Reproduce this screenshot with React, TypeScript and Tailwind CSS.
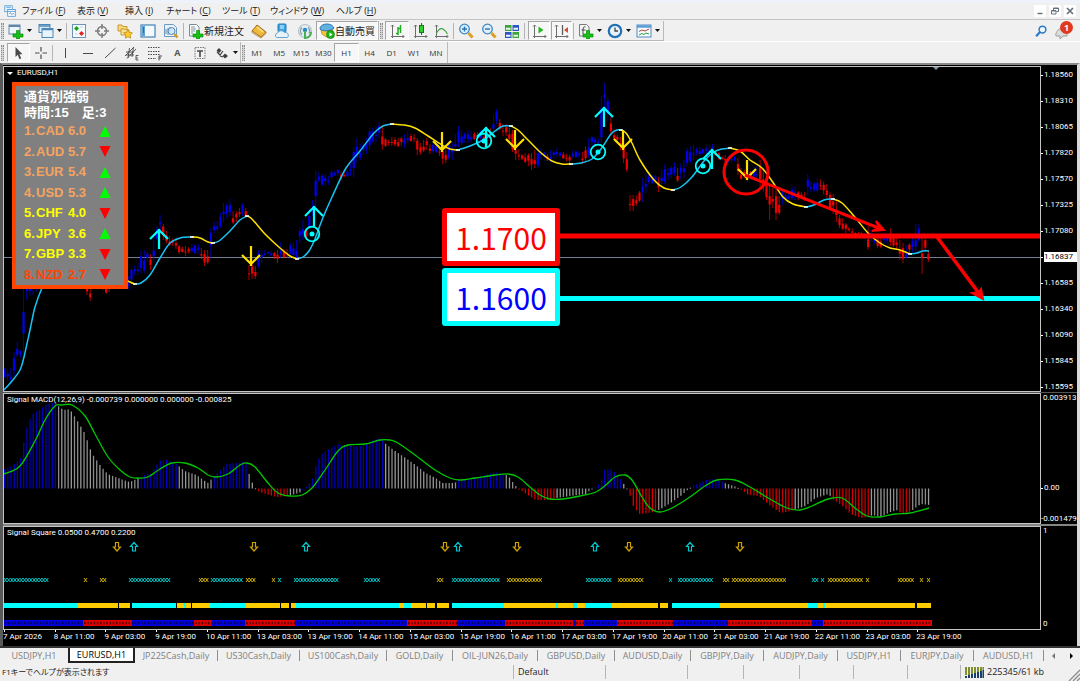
import type { ReactNode } from "react";

type Point = [number, number];
type Tone = "b" | "r" | "g";
type Bar = [number, number, number, Tone];
type Run = [number, number, string];

const BAR_STEP = 3.175;
const CYAN = "#00ffff";
const SKY = "#17c3f5";
const YELLOW = "#ffe100";

const menus = [
  { label: "ファイル", key: "F", width: "w-[55px]" },
  { label: "表示", key: "V", width: "w-[48px]" },
  { label: "挿入", key: "I", width: "w-[41px]" },
  { label: "チャート", key: "C", width: "w-[56px]" },
  { label: "ツール", key: "T", width: "w-[48px]" },
  { label: "ウィンドウ", key: "W", width: "w-[66px]" },
  { label: "ヘルプ", key: "H", width: "w-[50px]" },
];

const timeframes = ["M1", "M5", "M15", "M30", "H1", "H4", "D1", "W1", "MN"];

const strengths = [
  { rank: 1, code: "CAD", value: "6.0", up: true, color: "text-[#f4a460]" },
  { rank: 2, code: "AUD", value: "5.7", up: false, color: "text-[#f4a460]" },
  { rank: 3, code: "EUR", value: "5.4", up: true, color: "text-[#f4a460]" },
  { rank: 4, code: "USD", value: "5.3", up: true, color: "text-[#f4a460]" },
  { rank: 5, code: "CHF", value: "4.0", up: false, color: "text-[#ffff00]" },
  { rank: 6, code: "JPY", value: "3.6", up: true, color: "text-[#ffff00]" },
  { rank: 7, code: "GBP", value: "3.3", up: false, color: "text-[#ffff00]" },
  { rank: 8, code: "NZD", value: "2.7", up: false, color: "text-[#ff4500]" },
];

const prices = [
  "1.18560", "1.18310", "1.18065", "1.17820", "1.17570", "1.17325", "1.17080",
  "1.16837", "1.16585", "1.16340", "1.16090", "1.15845", "1.15595",
];

const times = [
  "7 Apr 2026", "8 Apr 11:00", "9 Apr 03:00", "9 Apr 19:00", "10 Apr 11:00",
  "13 Apr 03:00", "13 Apr 19:00", "14 Apr 11:00", "15 Apr 03:00", "15 Apr 19:00",
  "16 Apr 11:00", "17 Apr 03:00", "17 Apr 19:00", "20 Apr 11:00", "21 Apr 03:00",
  "21 Apr 19:00", "22 Apr 11:00", "23 Apr 03:00", "23 Apr 19:00",
];

const tabs = [
  { name: "USDJPY,H1", width: "w-[68px]" },
  { name: "EURUSD,H1", width: "w-[67px]" },
  { name: "JP225Cash,Daily", width: "w-[83px]" },
  { name: "US30Cash,Daily", width: "w-[82px]" },
  { name: "US100Cash,Daily", width: "w-[87px]" },
  { name: "GOLD,Daily", width: "w-[66px]" },
  { name: "OIL-JUN26,Daily", width: "w-[85px]" },
  { name: "GBPUSD,Daily", width: "w-[77px]" },
  { name: "AUDUSD,Daily", width: "w-[76px]" },
  { name: "GBPJPY,Daily", width: "w-[73px]" },
  { name: "AUDJPY,Daily", width: "w-[74px]" },
  { name: "USDJPY,H1", width: "w-[63px]" },
  { name: "EURJPY,Daily", width: "w-[73px]" },
  { name: "AUDUSD,H1", width: "w-[70px]" },
];

// x, high, low, direction
const candles: Bar[] = [
  [4, 368, 378, "b"], [9, 368, 384, "b"], [12, 352, 376, "b"], [16, 342, 357, "b"], [20, 350, 358, "b"],
  [23, 288, 355, "b"], [26, 260, 300, "b"], [60, 240, 275, "b"], [84, 270, 285, "r"], [88, 284, 295, "r"],
  [91, 284, 301, "r"], [94, 270, 284, "r"], [106, 282, 294, "r"], [110, 282, 292, "r"], [113, 270, 284, "b"],
  [127, 276, 289, "b"], [131, 268, 281, "b"], [136, 263, 275, "b"], [139, 261, 273, "b"], [142, 250, 273, "b"],
  [146, 252, 262, "b"], [150, 254, 270, "r"], [153, 236, 262, "b"], [157, 226, 240, "b"], [160, 215, 231, "b"],
  [163, 224, 240, "r"], [168, 236, 246, "r"], [174, 238, 249, "r"], [180, 245, 254, "r"], [186, 246, 256, "r"],
  [191, 244, 253, "b"], [196, 244, 254, "b"], [200, 248, 259, "r"], [204, 250, 266, "r"], [208, 250, 264, "r"],
  [211, 228, 258, "b"], [215, 222, 234, "b"], [220, 213, 228, "b"], [224, 203, 222, "b"], [229, 199, 216, "b"],
  [233, 211, 224, "r"], [237, 211, 222, "r"], [241, 203, 216, "b"], [245, 208, 217, "r"], [248, 265, 280, "r"],
  [252, 262, 279, "r"], [256, 266, 279, "r"], [259, 250, 268, "b"], [264, 250, 256, "b"], [270, 251, 256, "b"],
  [274, 252, 259, "r"], [277, 250, 263, "r"], [281, 242, 258, "b"], [285, 249, 258, "r"], [289, 243, 258, "b"],
  [295, 240, 260, "b"], [300, 227, 243, "b"], [304, 220, 240, "b"], [306, 228, 240, "r"], [309, 208, 230, "b"],
  [313, 200, 216, "b"], [316, 171, 208, "b"], [319, 172, 182, "b"], [323, 174, 186, "b"], [327, 176, 185, "b"],
  [332, 170, 179, "b"], [338, 169, 176, "b"], [342, 172, 181, "r"], [346, 170, 177, "b"], [351, 164, 176, "b"],
  [354, 147, 178, "b"], [357, 138, 162, "b"], [361, 144, 160, "b"], [365, 138, 154, "b"], [369, 128, 150, "b"],
  [374, 126, 142, "b"], [379, 122, 138, "b"], [382, 125, 150, "r"], [386, 138, 147, "r"], [391, 137, 146, "r"],
  [399, 138, 147, "r"], [403, 134, 148, "b"], [408, 132, 143, "b"], [412, 134, 142, "r"], [416, 138, 155, "r"],
  [420, 143, 155, "r"], [425, 138, 150, "r"], [430, 144, 154, "r"], [435, 142, 153, "b"], [439, 146, 156, "r"],
  [443, 147, 164, "r"], [447, 148, 163, "r"], [450, 142, 160, "b"], [454, 134, 152, "b"], [459, 126, 147, "b"],
  [463, 132, 143, "b"], [469, 130, 143, "b"], [475, 132, 140, "r"], [480, 130, 142, "b"], [486, 132, 146, "r"],
  [490, 128, 145, "r"], [494, 115, 135, "b"], [497, 109, 124, "b"], [500, 119, 130, "r"], [504, 124, 136, "r"],
  [509, 128, 142, "r"], [512, 130, 152, "r"], [516, 145, 160, "r"], [521, 154, 160, "r"], [526, 153, 163, "r"],
  [530, 153, 170, "r"], [534, 150, 168, "r"], [537, 148, 168, "b"], [542, 148, 160, "b"], [546, 154, 161, "r"],
  [551, 150, 162, "b"], [557, 148, 157, "b"], [563, 152, 159, "r"], [568, 155, 163, "r"], [573, 150, 158, "b"],
  [579, 151, 158, "b"], [583, 152, 164, "r"], [588, 138, 158, "b"], [592, 136, 146, "b"], [598, 138, 144, "b"],
  [601, 96, 143, "b"], [604, 83, 108, "b"], [608, 97, 122, "b"], [611, 117, 135, "r"], [615, 129, 140, "r"],
  [619, 137, 150, "r"], [622, 142, 163, "r"], [625, 152, 172, "r"], [628, 165, 178, "r"], [630, 195, 211, "r"],
  [634, 195, 211, "r"], [638, 191, 202, "r"], [641, 178, 202, "b"], [644, 173, 193, "b"], [649, 174, 184, "b"],
  [654, 175, 184, "b"], [657, 177, 192, "r"], [660, 170, 184, "b"], [664, 164, 184, "b"], [669, 168, 180, "b"],
  [674, 162, 176, "b"], [678, 168, 182, "r"], [682, 160, 178, "b"], [687, 148, 167, "b"], [692, 145, 160, "b"],
  [698, 147, 156, "b"], [706, 146, 154, "b"], [712, 144, 156, "b"], [718, 152, 160, "r"], [724, 155, 162, "r"],
  [730, 156, 163, "b"], [734, 156, 162, "b"], [738, 158, 175, "r"], [742, 168, 180, "r"], [748, 170, 181, "r"],
  [753, 167, 178, "b"], [758, 166, 180, "b"], [761, 160, 188, "r"], [765, 177, 200, "r"], [769, 183, 220, "r"],
  [773, 188, 208, "r"], [777, 188, 220, "r"], [780, 196, 215, "r"], [783, 190, 205, "b"], [788, 192, 200, "b"],
  [793, 186, 200, "b"], [799, 191, 200, "r"], [804, 192, 201, "r"], [808, 174, 196, "b"], [812, 182, 192, "b"],
  [818, 178, 192, "b"], [821, 179, 190, "r"], [825, 184, 198, "r"], [829, 192, 210, "r"], [834, 194, 214, "r"],
  [837, 200, 222, "r"], [840, 215, 228, "r"], [845, 223, 233, "r"], [851, 228, 234, "r"], [858, 232, 238, "r"],
  [865, 233, 239, "b"], [868, 226, 250, "r"], [872, 230, 242, "b"], [876, 238, 248, "r"], [880, 238, 248, "r"],
  [885, 233, 244, "b"], [891, 228, 246, "r"], [895, 238, 250, "r"], [899, 240, 260, "r"], [903, 243, 263, "r"],
  [907, 245, 259, "b"], [910, 243, 254, "r"], [914, 224, 253, "b"], [917, 224, 242, "b"], [920, 232, 244, "b"],
  [923, 236, 274, "r"], [926, 238, 252, "r"], [929, 250, 262, "r"],
];

// each piece of the moving average starts where the previous one ends
const average: { color: string; points: Point[] }[] = [
  { color: SKY, points: [[4, 390], [12, 381], [20, 370], [24, 357], [30, 330], [35, 307], [42, 288], [55, 262]] },
  { color: YELLOW, points: [[110, 262], [122, 277], [130, 282], [135, 284]] },
  { color: SKY, points: [[135, 284], [141, 283], [150, 275], [160, 258], [170, 243], [180, 238], [192, 237]] },
  { color: YELLOW, points: [[192, 237], [200, 238], [208, 242], [213, 243]] },
  { color: SKY, points: [[213, 243], [219, 241], [230, 231], [240, 220], [247, 216]] },
  { color: YELLOW, points: [[247, 216], [252, 219], [265, 234], [280, 248], [290, 256], [297, 259]] },
  { color: SKY, points: [[297, 259], [303, 257], [309, 251], [315, 239], [322, 220], [332, 197], [346, 168], [360, 151], [374, 133], [383, 126], [392, 124]] },
  { color: YELLOW, points: [[392, 124], [404, 125], [415, 128], [428, 136], [442, 145], [450, 149], [458, 150]] },
  { color: SKY, points: [[458, 150], [470, 146], [485, 139], [495, 131], [503, 126], [511, 126]] },
  { color: YELLOW, points: [[511, 126], [518, 130], [528, 140], [540, 152], [552, 161], [562, 164], [571, 164]] },
  { color: SKY, points: [[571, 164], [581, 163], [592, 159], [601, 149], [611, 134], [617, 130], [621, 130]] },
  { color: YELLOW, points: [[621, 130], [626, 133], [632, 143], [640, 160], [654, 180], [664, 188], [673, 190]] },
  { color: SKY, points: [[673, 190], [681, 187], [692, 177], [704, 161], [714, 152], [722, 149], [730, 148]] },
  { color: YELLOW, points: [[730, 148], [740, 151], [750, 160], [762, 168], [772, 181], [783, 197], [793, 204], [806, 207]] },
  { color: SKY, points: [[806, 207], [814, 205], [824, 200], [833, 199]] },
  { color: YELLOW, points: [[833, 199], [842, 203], [854, 216], [868, 233], [880, 243], [890, 248], [900, 250], [910, 254]] },
  { color: SKY, points: [[910, 254], [917, 253], [923, 251], [929, 251]] },
];

const upSignals: Point[] = [[159, 229], [314, 206], [486, 127], [604, 107], [712, 149]];
const downSignals: Point[] = [[251, 266], [442, 152], [515, 150], [623, 150], [747, 180]];
const targets: Point[] = [[312, 234], [484, 141], [598, 152], [703, 166]];

const macd: [number, number, Tone][] = [
  [4, 469, "b"], [10, 467, "b"], [15, 463, "b"], [20, 458, "b"], [23, 443, "b"], [26, 428, "b"], [29, 420, "b"],
  [33, 413, "b"], [40, 409, "b"], [45, 405, "b"], [50, 403, "b"], [56, 403, "b"], [59, 408, "g"], [65, 410, "g"],
  [69, 409, "g"], [75, 418, "g"], [84, 433, "g"], [91, 453, "g"], [100, 466, "g"], [107, 474, "g"], [120, 479, "g"],
  [129, 482, "g"], [136, 479, "g"], [139, 478, "b"], [145, 474, "b"], [150, 474, "b"], [155, 466, "b"],
  [160, 460, "b"], [167, 460, "b"], [174, 463, "b"], [177, 465, "g"], [184, 471, "g"], [196, 475, "g"],
  [207, 483, "g"], [210, 480, "g"], [213, 477, "b"], [220, 470, "b"], [226, 464, "b"], [235, 463, "b"],
  [243, 462, "b"], [246, 464, "b"], [249, 476, "g"], [253, 486, "g"], [257, 491, "r"], [265, 494, "r"],
  [276, 497, "r"], [288, 496, "r"], [291, 495, "g"], [298, 493, "g"], [302, 491, "b"], [308, 484, "b"],
  [313, 477, "b"], [316, 462, "b"], [321, 454, "b"], [330, 448, "b"], [338, 444, "b"], [347, 446, "b"],
  [360, 446, "b"], [370, 441, "b"], [380, 438, "b"], [384, 443, "g"], [393, 450, "g"], [405, 458, "g"],
  [415, 465, "g"], [425, 473, "g"], [435, 478, "g"], [442, 483, "g"], [454, 483, "g"], [458, 480, "b"],
  [470, 479, "b"], [485, 475, "b"], [495, 472, "b"], [504, 475, "b"], [507, 475, "g"], [512, 482, "g"],
  [516, 487, "g"], [520, 490, "r"], [527, 495, "r"], [535, 500, "r"], [552, 500, "r"], [556, 498, "g"],
  [570, 496, "g"], [585, 494, "g"], [590, 490, "g"], [595, 487, "b"], [600, 482, "b"], [604, 470, "b"],
  [610, 469, "b"], [615, 473, "b"], [619, 478, "b"], [622, 482, "g"], [625, 487, "g"], [628, 491, "r"],
  [633, 507, "r"], [639, 514, "r"], [648, 513, "r"], [656, 511, "r"], [660, 509, "g"], [670, 503, "g"],
  [680, 496, "g"], [688, 489, "g"], [692, 486, "b"], [705, 480, "b"], [715, 479, "b"], [721, 481, "b"],
  [724, 483, "g"], [736, 487, "g"], [741, 490, "r"], [748, 495, "r"], [758, 496, "r"], [770, 506, "r"],
  [780, 513, "r"], [790, 511, "r"], [793, 510, "g"], [805, 506, "g"], [815, 498, "g"], [828, 494, "g"],
  [832, 499, "r"], [842, 506, "r"], [850, 514, "r"], [860, 518, "r"], [868, 517, "r"], [872, 515, "g"],
  [880, 517, "g"], [890, 512, "g"], [897, 510, "g"], [901, 514, "r"], [908, 512, "r"], [912, 510, "g"],
  [920, 504, "g"], [929, 505, "g"],
];

const macdSignal: Point[] = [
  [4, 474], [20, 466], [35, 441], [45, 420], [55, 406], [62, 405], [72, 405], [85, 416], [95, 434], [108, 457],
  [120, 470], [130, 477], [138, 478], [148, 477], [160, 469], [172, 463], [185, 463], [198, 468], [208, 475],
  [216, 477], [228, 474], [240, 465], [247, 463], [255, 467], [268, 483], [278, 493], [290, 496], [302, 495],
  [312, 488], [325, 470], [338, 451], [348, 445], [365, 444], [380, 440], [390, 440], [398, 443], [415, 455],
  [435, 470], [450, 478], [460, 480], [475, 478], [495, 475], [508, 474], [518, 477], [530, 487], [540, 495],
  [550, 499], [563, 499], [580, 496], [596, 492], [607, 484], [615, 477], [625, 475], [632, 480], [642, 497],
  [650, 508], [660, 512], [672, 508], [690, 497], [705, 486], [717, 480], [735, 480], [750, 487], [770, 499],
  [787, 508], [800, 510], [812, 506], [828, 499], [842, 498], [855, 508], [867, 516], [880, 517], [895, 514],
  [910, 513], [929, 508],
];

const squareArrows: [number, boolean][] = [
  [117, false], [134, true], [254, false], [306, true], [445, false], [458, true],
  [517, false], [595, true], [629, false], [690, true], [740, false],
];

const crossRuns: Run[] = [
  [4, 50, "c"], [84, 88, "y"], [100, 107, "y"], [129, 171, "c"], [199, 209, "y"], [211, 244, "c"], [246, 257, "y"],
  [272, 276, "y"], [278, 282, "c"], [294, 339, "c"], [364, 380, "c"], [437, 444, "y"], [452, 501, "c"],
  [507, 543, "y"], [586, 613, "c"], [618, 644, "y"], [669, 673, "c"], [678, 714, "c"], [723, 730, "y"],
  [732, 787, "y"], [812, 819, "c"], [821, 826, "c"], [828, 864, "y"], [866, 870, "y"], [898, 915, "y"],
  [920, 924, "y"], [927, 931, "y"],
];

const bandRuns: Run[] = [
  [4, 78, "c"], [78, 118, "y"], [119, 130, "y"], [132, 176, "c"], [177, 184, "y"], [184, 186, "c"], [186, 191, "y"],
  [192, 210, "y"], [210, 246, "c"], [246, 280, "y"], [281, 289, "y"], [291, 296, "y"], [296, 399, "c"],
  [399, 404, "y"], [404, 411, "c"], [411, 426, "y"], [427, 435, "y"], [437, 449, "y"], [452, 504, "c"],
  [504, 556, "y"], [556, 558, "c"], [558, 573, "y"], [573, 577, "c"], [577, 585, "y"], [585, 612, "c"],
  [612, 658, "y"], [660, 668, "y"], [672, 720, "c"], [720, 808, "y"], [808, 818, "c"], [818, 823, "y"],
  [823, 825, "c"], [825, 915, "y"], [917, 931, "y"],
];

const trendRuns: Run[] = [
  [4, 83, "b"], [83, 132, "r"], [132, 194, "b"], [194, 212, "r"], [212, 245, "b"], [245, 295, "r"], [295, 407, "b"],
  [407, 457, "r"], [457, 505, "b"], [505, 573, "r"], [573, 576, "b"], [576, 584, "r"], [584, 617, "b"],
  [617, 673, "r"], [673, 728, "b"], [728, 812, "r"], [812, 823, "b"], [823, 932, "r"],
];

const barXs = Array.from({ length: 292 }, (_, i) => 4 + i * BAR_STEP);

function locate<T extends [number, ...unknown[]]>(rows: T[], x: number) {
  let i = 0;
  while (i < rows.length - 2 && rows[i + 1][0] < x) i++;
  const a = rows[i];
  const b = rows[i + 1];
  const t = Math.min(1, Math.max(0, (x - a[0]) / (b[0] - a[0])));
  return { a, b, t };
}

const mix = (a: number, b: number, t: number) => a + (b - a) * t;

function curve(points: Point[]) {
  let d = `M${points[0][0]} ${points[0][1]}`;
  for (let i = 0; i < points.length - 1; i++) {
    const p0 = points[i - 1] ?? points[i];
    const p1 = points[i];
    const p2 = points[i + 1];
    const p3 = points[i + 2] ?? p2;
    d += `C${p1[0] + (p2[0] - p0[0]) / 6} ${p1[1] + (p2[1] - p0[1]) / 6} ${p2[0] - (p3[0] - p1[0]) / 6} ${p2[1] - (p3[1] - p1[1]) / 6} ${p2[0]} ${p2[1]}`;
  }
  return d;
}

function crosses(from: number, to: number) {
  let d = "";
  for (let x = from; x + 2.5 <= to; x += BAR_STEP) d += `M${x} 578l3 4M${x + 3} 578l-3 4`;
  return d;
}

function Icon({ children, size = "size-4" }: { children: ReactNode; size?: string }) {
  return (
    <svg viewBox="0 0 16 16" className={`${size} shrink-0`} fill="none" aria-hidden="true">
      {children}
    </svg>
  );
}

function Caret() {
  return (
    <svg viewBox="0 0 5 3" className="h-[3px] w-[5px] shrink-0" aria-hidden="true">
      <path d="M0 0h5L2.5 3z" fill="#111" />
    </svg>
  );
}

function ToolButton({
  label,
  children,
  caret,
  pressed,
  width = "flex-1",
}: {
  label: string;
  children: ReactNode;
  caret?: boolean;
  pressed?: boolean;
  width?: string;
}) {
  return (
    <button
      type="button"
      aria-label={label}
      aria-pressed={pressed}
      className={`flex h-[19px] items-center justify-center gap-[3px] ${width} ${
        pressed ? "border border-[#a5a5a5] border-r-white border-b-white bg-[#f7f7f7]" : ""
      }`}
    >
      {children}
      {caret && <Caret />}
    </button>
  );
}

function Grip() {
  return <div className="mx-px h-4 w-[3px] shrink-0 border-x border-dotted border-[#8f8f8f] bg-[#d2d2d2]" />;
}

function Divider() {
  return <div className="mx-px h-4 w-px shrink-0 bg-[#b4b4b4]" />;
}

const plus = <path d="M8.5 7.5h3V11H15v3h-3.5v2h-3v-2H5v-3h3.5z" fill="#16c116" stroke="#0b8a0b" strokeWidth=".7" />;
const axes = <path d="M3.5 2v11.5H15M2 13.5h1.500M3.500 13.5V15M2 3.5 3.5 2 5 3.5M13.5 12l1.500 1.500-1.500 1.500" stroke="#6c6c6c" />;

function MenuBar() {
  return (
    <div className="flex h-5 items-center border-t-3 border-b border-t-[#edf2fb] border-b-[#c4c4c4] pl-1">
      <Icon size="size-3">
        <rect x="1" y="1" width="10" height="8" fill="#e3f1fb" stroke="#4f9bd4" />
        <rect x="5" y="6" width="10" height="9" fill="#fff" stroke="#3b8acb" />
        <path d="M5 8.500h10M3 3h6M7 12l1.500-2 2 3 1.500-2 1.500 1" stroke="#3b8acb" />
      </Icon>
      <nav className="ml-[6px] flex">
        {menus.map((menu) => (
          <button key={menu.key} type="button" className={`${menu.width} text-left whitespace-nowrap`}>
            {menu.label} (<span className="underline">{menu.key}</span>)
          </button>
        ))}
      </nav>
      <div className="mr-1 ml-auto flex gap-[3px]">
        {["Minimize", "Restore", "Close"].map((name) => (
          <button key={name} type="button" aria-label={name} className="flex h-3 w-3 items-center justify-center bg-white">
            <Icon size="size-2">
              {name === "Minimize" && <path d="M3 13h10" stroke="#66727c" strokeWidth="3" />}
              {name === "Restore" && (
                <path d="M5 6V2h10v7h-4M1 7h9v7H1zM1 8h9M5 3h10" stroke="#66727c" strokeWidth="2" />
              )}
              {name === "Close" && <path d="m2 2 12 12M14 2 2 14" stroke="#66727c" strokeWidth="3.500" />}
            </Icon>
          </button>
        ))}
      </div>
    </div>
  );
}

function StandardToolbar() {
  return (
    <div className="flex h-[22px] items-center border-b border-[#fdfdfd] pt-px">
      <div className="flex h-full items-center border-r border-b border-[#b9b9b9]">
        <Grip />
        <ToolButton label="New chart" caret width="w-[29px]">
          <Icon>
            <rect x="1" y="2" width="11" height="9" fill="#eef6fc" stroke="#5f87ab" />
            <path d="M1 3h11" stroke="#5f87ab" strokeWidth="2" />
            {plus}
          </Icon>
        </ToolButton>
        <ToolButton label="Profiles" caret width="w-[31px]">
          <Icon>
            <rect x="1" y="1.500" width="11" height="8" fill="#dcecf8" stroke="#4d87b8" />
            <rect x="4" y="5.500" width="11" height="9" fill="#e9f3fb" stroke="#4d87b8" />
            <path d="M4 6.500h11M1 3h11" stroke="#4d87b8" strokeWidth="1.500" />
          </Icon>
        </ToolButton>
        <Divider />
        <div className="flex w-[114px]">
          <ToolButton label="Market watch">
            <Icon>
              <rect x="1.500" y="1.500" width="13" height="13" fill="#f6faff" stroke="#6b93b8" />
              <path d="m5.500 3 2.500 2.500L5.500 8 3 5.500z" fill="#16a516" />
              <path d="m10.500 8 2.500 2.500-2.500 2.500L8 10.500z" fill="#e32222" />
              <path d="M9 4h3M4 11h3" stroke="#c3cfdb" />
            </Icon>
          </ToolButton>
          <ToolButton label="Data window">
            <Icon>
              <circle cx="8" cy="8" r="4.500" stroke="#7c7c7c" strokeWidth="1.500" />
              <path d="M8 1v5M8 10v5M1 8h5M10 8h5" stroke="#7c7c7c" strokeWidth="1.500" />
            </Icon>
          </ToolButton>
          <ToolButton label="Navigator">
            <Icon>
              <path d="M1 2h4l1 1.500h4V8H1z" fill="#f9d877" stroke="#c79a32" />
              <path d="M4 6h4l1 1h3v5H4z" fill="#fbe093" stroke="#c79a32" />
              <path d="m11 6.500 1.400 2.900 3 .4-2.200 2.200.5 3.200-2.700-1.500-2.700 1.500.5-3.200-2.200-2.200 3-.4z" fill="#ffc928" stroke="#bf8a17" strokeWidth=".8" />
            </Icon>
          </ToolButton>
          <ToolButton label="Terminal">
            <Icon>
              <rect x="1" y="2" width="14" height="12" fill="#f4f9fd" stroke="#4383b5" strokeWidth="1.200" />
              <path d="M2 3h3v10H2z" fill="#5b9fd4" />
              <path d="M3 5h1M3 7h1M3 9h1" stroke="#173e5e" />
            </Icon>
          </ToolButton>
          <ToolButton label="Strategy tester">
            <Icon>
              <path d="M1.500 1.500h9l3 3v9h-12z" fill="#e9f2fa" stroke="#6d9cc3" />
              <path d="M3 11V6M5 12V5M7 9V4" stroke="#638cac" />
              <circle cx="8.500" cy="8" r="3.500" fill="#cfe5f6" fillOpacity=".8" stroke="#5286b0" />
              <path d="m11.500 11 3 3.500" stroke="#d89a1c" strokeWidth="2.500" />
            </Icon>
          </ToolButton>
        </div>
        <Divider />
        <ToolButton label="新規注文" width="w-[62px]">
          <Icon>
            <path d="M1.500 1.500h7l2.500 2.500v9H1.500z" fill="#f8fafb" stroke="#7c8a92" />
            <path d="M3 4h4M3 6h5M3 8h4M3 10h2" stroke="#8896a0" />
            {plus}
          </Icon>
          <span className="-ml-[3px] text-[10px] whitespace-nowrap">新規注文</span>
        </ToolButton>
        <div className="flex w-[69px]">
          <ToolButton label="MetaEditor">
            <Icon>
              <path d="m6 2 9 7-5 5L1 8z" fill="#f1b83c" stroke="#9c6a16" />
              <path d="m1 8 9 6 5-5v1.500l-5 4.500L1 9.500z" fill="#fdf3cf" stroke="#9c6a16" strokeWidth=".7" />
              <path d="m6 4 6 5" stroke="#fce49a" strokeWidth="1.500" />
            </Icon>
          </ToolButton>
          <ToolButton label="VPS">
            <Icon>
              <rect x="4" y="1" width="8" height="8" rx="1" fill="#3ba4e6" stroke="#247db7" />
              <path d="M6 3h4M6 5h4" stroke="#e5f6ff" />
              <path d="M2.500 14.500a2.500 2.500 0 0 1 1-4.500 4 4 0 0 1 7-.5 3 3 0 0 1 3 5z" fill="#e6f3fc" stroke="#63a4d0" />
            </Icon>
          </ToolButton>
          <ToolButton label="Signals">
            <Icon>
              <circle cx="8" cy="8" r="6.500" fill="#e9eef0" stroke="#b3c3cc" strokeWidth="1.200" />
              <path d="M5 11.500a5 5 0 0 1 0-7M11 4.500a5 5 0 0 1 1 6" stroke="#7fa5b5" strokeWidth="1.500" />
              <circle cx="8" cy="7" r="2.200" fill="#2989cf" />
              <path d="M8 8v7c4 0 6-3 6-6" stroke="#48ad55" strokeWidth="2" />
            </Icon>
          </ToolButton>
        </div>
        <ToolButton label="自動売買" pressed width="w-[62px]">
          <Icon>
            <path d="M2 7h12l-2 5-5 2-4-3z" fill="#f4c63d" stroke="#b98d1c" strokeWidth=".8" />
            <path d="M1 6c0-3 3-5 7-5s6 2 7 4c-2 3-12 4-14 1z" fill="#5eb1e3" stroke="#3077a8" />
            <circle cx="11.500" cy="11.500" r="4" fill="#1db51d" stroke="#0e830e" strokeWidth=".7" />
            <path d="M10.500 9.500v4l3-2z" fill="#fff" />
          </Icon>
          <span className="-ml-[3px] text-[10px] whitespace-nowrap">自動売買</span>
        </ToolButton>
      </div>
      <div className="flex h-full items-center border-r border-b border-[#b9b9b9]">
        <Grip />
        <div className="ml-px flex w-[67px]">
          <ToolButton label="Bar chart" pressed>
            <Icon>
              {axes}
              <path d="M9 4v8M11.500 2v8M9 10.500h-2M9 5.500h2.500" stroke="#20ad20" strokeWidth="1.500" />
            </Icon>
          </ToolButton>
          <ToolButton label="Candlesticks">
            <Icon>
              {axes}
              <path d="M9.500 0v12" stroke="#0c800c" />
              <rect x="7.500" y="2.500" width="4" height="7" fill="#30cf30" stroke="#0c800c" />
            </Icon>
          </ToolButton>
          <ToolButton label="Line chart">
            <Icon>
              {axes}
              <path d="M3.500 10c3-5 6-7 11 1" stroke="#3ca33c" strokeWidth="1.200" />
            </Icon>
          </ToolButton>
        </div>
        <Divider />
        <div className="flex w-[68px]">
          <ToolButton label="Zoom in">
            <Icon>
              <circle cx="6.500" cy="6" r="4.800" fill="#dff0fc" stroke="#3d86c0" strokeWidth="1.300" />
              <path d="M4 6h5M6.500 3.500v5" stroke="#2775b3" strokeWidth="1.400" />
              <path d="m10.500 10 4 4.500" stroke="#dba023" strokeWidth="3" />
            </Icon>
          </ToolButton>
          <ToolButton label="Zoom out">
            <Icon>
              <circle cx="6.500" cy="6" r="4.800" fill="#dff0fc" stroke="#3d86c0" strokeWidth="1.300" />
              <path d="M4 6h5" stroke="#2775b3" strokeWidth="1.400" />
              <path d="m10.500 10 4 4.500" stroke="#dba023" strokeWidth="3" />
            </Icon>
          </ToolButton>
          <ToolButton label="Tile windows">
            <Icon>
              <path d="M1 2h6.500v6H1z" fill="#3ba53b" />
              <path d="M8.500 2H15v6H8.500z" fill="#2b56c5" />
              <path d="M1 9h6.500v6H1z" fill="#2b56c5" />
              <path d="M8.500 9H15v6H8.500z" fill="#3ba53b" />
              <path d="M2 5.800h4.500M9.500 5.800H14M2 12.800h4.500M9.500 12.800H14" stroke="#eef6ee" strokeWidth="2" />
            </Icon>
          </ToolButton>
        </div>
        <Divider />
        <div className="ml-[2px] flex w-[44px] gap-px">
          <ToolButton label="Auto scroll" pressed>
            <Icon>
              {axes}
              <path d="M7.500 3.500v7l5-3.500z" fill="#25b425" />
            </Icon>
          </ToolButton>
          <ToolButton label="Chart shift" pressed>
            <Icon>
              {axes}
              <path d="M9.500 2v10" stroke="#5c5c5c" strokeWidth="1.300" />
              <path d="m15 4-4 3 4 3z" fill="#d2512f" />
            </Icon>
          </ToolButton>
        </div>
        <Divider />
        <div className="flex w-[88px]">
          <ToolButton label="Indicators" caret>
            <Icon>
              <path d="M1.500 1.500h7l2.500 2.500v9H1.500z" fill="#f4f4f4" stroke="#7b7b7b" />
              <path d="M7.500 4C5 3 5 5 5 11M3.500 7h4" stroke="#4b4b4b" />
              {plus}
            </Icon>
          </ToolButton>
          <ToolButton label="Periods" caret>
            <Icon>
              <circle cx="8" cy="8" r="6.200" fill="#e8f2fa" stroke="#2370b5" strokeWidth="2.200" />
              <path d="M8 4.500V8h3" stroke="#444" strokeWidth="1.300" />
            </Icon>
          </ToolButton>
          <ToolButton label="Templates" caret>
            <Icon>
              <rect x="1" y="2" width="14" height="12" fill="#f7fbff" stroke="#4a8ac0" />
              <path d="M1 3.500h14" stroke="#5b9ed6" strokeWidth="2.500" />
              <path d="m3 8.500 3-1.500 3 1 4-2" stroke="#b64630" />
              <path d="m3 12 3-1.500 2 1 2-1.500 3 1" stroke="#2c9d3c" />
            </Icon>
          </ToolButton>
        </div>
      </div>
      <div className="mr-[6px] ml-auto flex items-center gap-[7px]">
        <button type="button" aria-label="Search">
          <Icon size="size-3">
            <circle cx="10" cy="6" r="4.500" fill="#eef6fd" stroke="#2f7bc4" strokeWidth="2" />
            <path d="m7 9-5.500 6" stroke="#2f7bc4" strokeWidth="3" />
          </Icon>
        </button>
        <button type="button" aria-label="Notifications" className="relative h-4 w-5">
          <Icon>
            <path d="M5 6h8v7H9l-3 3v-3H2c-1-2 1-5 3-7z" fill="#dcdcdc" stroke="#9c9c9c" />
          </Icon>
          <span className="absolute -top-[2px] right-px flex size-[13px] items-center justify-center rounded-full bg-[#e03a1e] text-[9px] font-bold text-white">
            1
          </span>
        </button>
      </div>
    </div>
  );
}

function LineToolbar() {
  return (
    <div className="flex h-[21px] items-center">
      <div className="flex h-full items-center border-r border-[#b9b9b9]">
        <Grip />
        <div className="ml-[2px] flex w-[44px]">
          <ToolButton label="Cursor" pressed>
            <Icon size="size-[14px]">
              <path d="M4 1v11.500l2.600-2.400L8.500 15l2-.9-2-4.600H12z" fill="#4a4a4a" />
            </Icon>
          </ToolButton>
          <ToolButton label="Crosshair">
            <Icon>
              <path d="M8 2v4.500M8 9.500V14M2 8h4.500M9.500 8H14" stroke="#4a4a4a" strokeWidth="1.200" />
            </Icon>
          </ToolButton>
        </div>
        <Divider />
        <div className="flex w-[157px]">
          <ToolButton label="Vertical line">
            <Icon>
              <path d="M8.500 3v10" stroke="#4a4a4a" />
            </Icon>
          </ToolButton>
          <ToolButton label="Horizontal line">
            <Icon>
              <path d="M3 8.500h10" stroke="#4a4a4a" />
            </Icon>
          </ToolButton>
          <ToolButton label="Trendline">
            <Icon>
              <path d="M3 13 13.500 3" stroke="#4a4a4a" />
            </Icon>
          </ToolButton>
          <ToolButton label="Equidistant channel">
            <Icon>
              <path d="M1 11 10 2M3 13.500 12 4M2 7h8M2 10h8M5.500 3 4 13M9.500 2 8 12M14.500 10.500H12v4.500h2.500M12 13h2" stroke="#4a4a4a" strokeWidth=".9" />
            </Icon>
          </ToolButton>
          <ToolButton label="Fibonacci retracement">
            <Icon>
              <path d="M1 2.500h12M1 6.500h12M1 9.500h12M1 13.500h8" stroke="#4a4a4a" strokeDasharray="1.500 1" />
              <path d="M12 15.500V11h3M12 13h2" stroke="#4a4a4a" />
            </Icon>
          </ToolButton>
          <ToolButton label="Text">
            <span className="text-[9px] font-bold text-[#555]">A</span>
          </ToolButton>
          <ToolButton label="Text label">
            <Icon>
              <rect x="3" y="2.500" width="10" height="11" stroke="#777" strokeDasharray="1.500 1" />
              <path d="M5 6h6M8 6v6" stroke="#4a4a4a" strokeWidth="1.600" />
            </Icon>
          </ToolButton>
        </div>
        <ToolButton label="Arrows" caret width="w-[29px]">
          <Icon>
            <path d="m5 3 2.500 2.500L5 8 2.500 5.500zM11 8.500l3 2.500-3 2.500L8.500 11z" fill="#3f3f3f" />
            <path d="m3 7 3 3 3-4M6 11l3 1" stroke="#3f3f3f" strokeWidth="1.200" />
          </Icon>
        </ToolButton>
      </div>
      <div className="flex h-full items-center border-r border-[#b9b9b9]">
        <Grip />
        <div className="flex w-[201px]">
          {timeframes.map((frame) => (
            <ToolButton key={frame} label={frame} pressed={frame === "H1"}>
              <span className="text-[8px] text-[#333]">{frame}</span>
            </ToolButton>
          ))}
        </div>
      </div>
    </div>
  );
}

function StrengthPanel() {
  return (
    <section className="absolute top-[15px] left-2 w-[116px] border-4 border-[#ff4500] bg-[#808080] pt-[3px] pl-2 font-['Liberation_Sans','Noto_Sans_CJK_JP',sans-serif] text-[13px] font-bold">
      <h2 className="leading-4 text-white">通貨別強弱</h2>
      <p className="leading-4 whitespace-nowrap text-white">
        時間:15<span className="ml-[13px]">足:3</span>
      </p>
      <ul className="flex h-[164px] flex-col">
        {strengths.map((row) => (
          <li key={row.code} className={`grid flex-1 grid-cols-[12px_32px_31px_12px] items-center leading-4 ${row.color}`}>
            <span>{row.rank}.</span>
            <span>{row.code}</span>
            <span>{row.value}</span>
            <svg viewBox="0 0 12 11" className="h-[11px] w-3" aria-label={row.up ? "up" : "down"}>
              <path d={row.up ? "M6 0 11.500 11H.5z" : "M.5 0h11L6 11z"} fill={row.up ? "#00ff00" : "#ff0000"} />
            </svg>
          </li>
        ))}
      </ul>
    </section>
  );
}

function Candles() {
  return (
    <g>
      {barXs.map((x, i) => {
        const { a, b, t } = locate(candles, x);
        const near = t < 0.5 ? a : b;
        const exact = Math.abs(near[0] - x) < 1.7 || Math.abs(a[1] - b[1]) > 28;
        const top = exact ? near[1] : mix(a[1], b[1], t) + ((i * 5) % 3);
        const bottom = exact ? near[2] : mix(a[2], b[2], t) - ((i * 7) % 3);
        const upper = (bottom - top) * (0.16 + ((i * 7) % 5) * 0.1);
        const lower = (bottom - top) * (0.12 + ((i * 11) % 4) * 0.1);
        const color = near[3] === "b" ? "#0000f0" : "#f00000";
        return (
          <g key={i} fill={color}>
            <rect x={x} y={top} width="1" height={Math.max(1, bottom - top)} fillOpacity=".7" />
            <rect x={x - 0.6} y={top + upper} width="2.200" height={Math.max(1, bottom - top - upper - lower)} />
          </g>
        );
      })}
    </g>
  );
}

function PriceChart() {
  return (
    <svg className="block h-[324px] w-full" role="img" aria-label="EURUSD H1 price chart">
      <g transform="translate(-4 -67)">
        <path d="M4 257.500h3000" stroke="#708090" />
        <Candles />
        {average.map((piece, i) => (
          <path key={i} d={curve(piece.points)} fill="none" stroke={piece.color} strokeWidth="1.500" />
        ))}
        {average.slice(2).map((piece, i) => (
          <path key={i} d={`M${piece.points[0][0] - 2} ${piece.points[0][1]}h4`} stroke="#fff" strokeWidth="1.500" />
        ))}
        {upSignals.map(([x, y]) => (
          <path key={x} d={`M${x} ${y + 20}V${y}M${x - 9} ${y + 10}l9-9 9 9`} fill="none" stroke={CYAN} strokeWidth="2.200" />
        ))}
        {downSignals.map(([x, y]) => (
          <path key={x} d={`M${x} ${y - 20}V${y}M${x - 9} ${y - 11}l9 9 9-9`} fill="none" stroke={YELLOW} strokeWidth="2.200" />
        ))}
        {targets.map(([x, y]) => (
          <g key={x}>
            <circle cx={x} cy={y} r="7.300" fill="none" stroke={CYAN} strokeWidth="1.800" />
            <circle cx={x} cy={y} r="2.500" fill={CYAN} />
          </g>
        ))}
        <path d="M932 66h8l-4 4z" fill="#8b98a5" />
        <path d="M560 236h2480" stroke="#ff0000" strokeWidth="5" />
        <path d="M560 298.500h2480" stroke={CYAN} strokeWidth="5" />
        <g fill="none" stroke="#ff0000">
          <circle cx="746" cy="172" r="22" strokeWidth="3" />
          <path d="M745 175 881 229" strokeWidth="3" />
          <path d="m876 221 8 9-12 1 7-3z" strokeWidth="2" fill="#ff0000" />
          <path d="m937 237 44 59" strokeWidth="3.500" />
          <path d="m981 289 2 10-11-6 7-1z" strokeWidth="2" fill="#ff0000" />
        </g>
      </g>
    </svg>
  );
}

function MacdChart() {
  const zero = 488.5;
  const tones = { b: "#0000c8", r: "#dc0000", g: "#9a9a9a" };
  return (
    <svg className="block h-[129px] w-full" role="img" aria-label="MACD histogram">
      <g transform="translate(-4 -394)">
        {barXs.map((x, i) => {
          const { a, b, t } = locate(macd, x);
          const y = mix(a[1], b[1], t);
          const tone = (t < 0.5 ? a : b)[2];
          return (
            <rect
              key={i}
              x={x}
              y={Math.min(y, zero)}
              width="1.300"
              height={Math.max(1, Math.abs(zero - y))}
              fill={tones[tone]}
              fillOpacity={i % 3 === 0 ? 1 : 0.9}
            />
          );
        })}
        <path d={curve(macdSignal)} fill="none" stroke="#00c800" strokeWidth="1.300" />
      </g>
    </svg>
  );
}

function SquareChart() {
  return (
    <svg className="block h-[102px] w-full" role="img" aria-label="Signal squares">
      <g transform="translate(-4 -527)">
        {squareArrows.map(([x, up]) => (
          <path
            key={x}
            d={
              up
                ? `M${x} 542.500l3.500 4h-2v4.500h-3V546.500h-2z`
                : `M${x} 551l3.500-4h-2v-4.500h-3V547h-2z`
            }
            fill="none"
            stroke={up ? "#00c8d0" : "#d0a000"}
            strokeWidth="1.200"
          />
        ))}
        {crossRuns.map(([from, to, tone]) => (
          <path key={from} d={crosses(from, to)} stroke={tone === "c" ? "#00d8d8" : "#e0c000"} strokeWidth=".9" />
        ))}
        {bandRuns.map(([from, to, tone]) => (
          <rect key={from} x={from} y="603" width={to - from} height="5" fill={tone === "c" ? CYAN : "#ffcc00"} />
        ))}
        {trendRuns.map(([from, to, tone]) => (
          <rect key={from} x={from} y="620" width={to - from} height="6" fill={tone === "b" ? "#0000e0" : "#e00000"} />
        ))}
        {barXs.map((x, i) => (
          <ellipse key={i} cx={x + 1.5} cy="623" rx=".9" ry="1.500" fill="#000" fillOpacity=".6" />
        ))}
      </g>
    </svg>
  );
}

function Pane({ title, chart, axis, children }: { title: ReactNode; chart: ReactNode; axis: ReactNode; children?: ReactNode }) {
  return (
    <div className="flex">
      <div className="relative min-w-0 flex-1 overflow-hidden border border-[#c4c4c4] bg-black">
        {chart}
        <div className="absolute top-0 left-[3px] flex h-3 items-center gap-1 whitespace-nowrap">{title}</div>
        {children}
      </div>
      <div className="flex w-9 flex-col bg-black whitespace-nowrap">{axis}</div>
    </div>
  );
}

function ChartWindow() {
  return (
    <main className="border-x-3 border-t-2 border-r-[#d9d9d9] border-t-[#8a8a8a] border-l-[#5a5a5a] bg-black pt-px font-['Roboto',sans-serif] text-[8px] leading-[10px] text-white">
      <Pane
        title={
          <>
            <svg viewBox="0 0 6 3" className="h-[3px] w-[6px]" aria-hidden="true">
              <path d="M0 0h6L3 3z" fill="#fff" />
            </svg>
            EURUSD,H1
          </>
        }
        chart={<PriceChart />}
        axis={
          <ol className="-mb-[3px] flex h-full flex-col justify-between pt-1">
            {prices.map((price) => (
              <li key={price} className="flex items-center gap-px">
                <span className="h-px w-[2px] bg-white" />
                <span className={price === "1.16837" ? "flex-1 bg-white text-black" : ""}>{price}</span>
              </li>
            ))}
          </ol>
        }
      >
        <StrengthPanel />
        <div className="absolute top-[141px] left-[438px] flex flex-col gap-[2px] font-['Noto_Sans_CJK_JP',sans-serif] text-[30px]">
          <div className="flex h-[58px] w-[118px] items-center justify-center rounded-[3px] border-[5px] border-[#ff0000] bg-white text-[#ff0000]">
            1.1700
          </div>
          <div className="flex h-[58px] w-[118px] items-center justify-center rounded-[3px] border-[5px] border-[#00ffff] bg-white text-[#0000ff]">
            1.1600
          </div>
        </div>
      </Pane>
      <div className="h-px bg-[#555]" />
      <Pane
        title="Signal MACD(12,26,9) -0.000739 0.000000 0.000000 -0.000825"
        chart={<MacdChart />}
        axis={
          <>
            <span className="pl-[2px]">0.003913</span>
            <span className="mt-[80px] flex items-center gap-px">
              <span className="h-px w-[2px] bg-white" />
              0.00
            </span>
            <span className="mt-auto">-0.001479</span>
          </>
        }
      />
      <div className="h-[2px] bg-[#858585]" />
      <Pane
        title="Signal Square 0.0500 0.4700 0.2200"
        chart={<SquareChart />}
        axis={
          <div className="flex h-full flex-col justify-between pb-px pl-[2px]">
            <span>1</span>
            <span>0</span>
          </div>
        }
      />
      <ol className="grid h-4 w-[965px] grid-cols-19 pl-px">
        {times.map((time) => (
          <li key={time} className="whitespace-nowrap">
            <div className="h-[2px] w-px bg-white" />
            <span className="-ml-px">{time}</span>
          </li>
        ))}
      </ol>
    </main>
  );
}

function ChartTabs() {
  return (
    <div className="flex h-[17px] border-t-2 border-[#333] text-[9px] text-[#808080]">
      {tabs.map((tab, i) =>
        i === 1 ? (
          <button
            key={i}
            type="button"
            className={`${tab.width} shrink-0 border-x-2 border-b-2 border-[#222] bg-white whitespace-nowrap text-black`}
          >
            {tab.name}
          </button>
        ) : (
          <button key={i} type="button" className={`${tab.width} flex shrink-0 items-center justify-center whitespace-nowrap`}>
            <span className="flex-1">{tab.name}</span>
            {i > 0 && <span className="h-[11px] w-px bg-[#8f8f8f]" />}
          </button>
        ),
      )}
      <div className="flex flex-1 items-center justify-around">
        <button type="button" aria-label="Scroll tabs left">
          <svg viewBox="0 0 3 6" className="h-[6px] w-[3px]">
            <path d="M3 0v6L0 3z" fill="#777" />
          </svg>
        </button>
        <button type="button" aria-label="Scroll tabs right">
          <svg viewBox="0 0 3 6" className="h-[6px] w-[3px]">
            <path d="M0 0v6l3-3z" fill="#000" />
          </svg>
        </button>
      </div>
    </div>
  );
}

function StatusBar() {
  return (
    <footer className="flex h-[18px] items-center text-[9px] text-[#222]">
      <span className="flex-1 pl-[2px] text-[8px]">F1キーでヘルプが表示されます</span>
      <span className="flex h-[14px] w-[92px] items-center border-l border-[#b5b5b5] pl-1">Default</span>
      <span className="h-[14px] w-[82px] border-l border-[#b5b5b5]" />
      <span className="h-[14px] w-[56px] border-l border-[#b5b5b5]" />
      <span className="h-[14px] w-[56px] border-l border-[#b5b5b5]" />
      <span className="h-[14px] w-[54px] border-l border-[#b5b5b5]" />
      <span className="h-[14px] w-[54px] border-l border-[#b5b5b5]" />
      <span className="h-[14px] w-[53px] border-l border-[#b5b5b5]" />
      <span className="flex h-[14px] w-[108px] items-center gap-[3px] border-l border-[#b5b5b5] pl-1">
        <svg viewBox="0 0 19 11" className="h-[11px] w-[19px]" aria-hidden="true">
          <path d="M1 0v8M4 0v8M7 0v7M10 0v6M13 0v5M16 0v4M18.500 0v3" stroke="#7f8f2e" strokeWidth="2" />
          <path d="M1 9v2M4 8v3M7 7v4M10 6v5M13 5v6M16 4v7M18.500 3v8" stroke="#17406b" strokeWidth="2" />
        </svg>
        225345/61 kb
      </span>
      <svg viewBox="0 0 12 12" className="size-3 self-end" aria-hidden="true">
        <path d="M1 12 12 1M5 12l7-7M9 12l3-3" stroke="#8c8c8c" strokeWidth="1.300" />
      </svg>
    </footer>
  );
}

export default function App() {
  return (
    <div className="min-h-screen overflow-hidden bg-[#f0f0f0] font-['Open_Sans','Noto_Sans_CJK_JP',sans-serif] text-[9px] leading-3 text-[#222] [font-feature-settings:'palt']">
      <MenuBar />
      <StandardToolbar />
      <LineToolbar />
      <ChartWindow />
      <ChartTabs />
      <StatusBar />
    </div>
  );
}
